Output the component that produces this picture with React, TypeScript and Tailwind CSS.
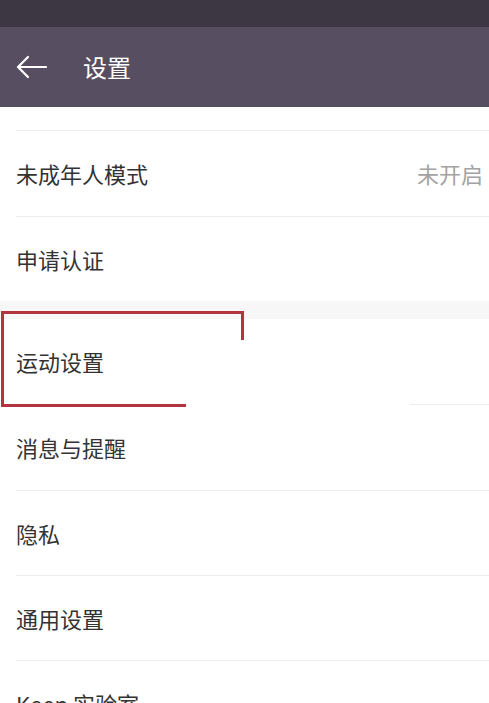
const font = { fontFamily: '"Noto Sans CJK SC", "Noto Sans", sans-serif' };

const Row = ({ label, value, sepClass = "ml-4", last = false, h = "h-[85px]" }: { label: string; value?: string; sepClass?: string; last?: boolean; h?: string }) => (
  <div>
    <div className={`flex items-center justify-between pl-4 pr-[6px] ${h}`}>
      <span className="text-[22px] text-[#333333]">{label}</span>
      {value && <span className="text-[22px] text-[#a3a3a3]">{value}</span>}
    </div>
    {!last && <div className={`h-px bg-[#ededed] ${sepClass}`} />}
  </div>
);

export default function App() {
  return (
    <div className="w-[489px] h-[703px] overflow-hidden bg-white relative" style={font}>
      <div className="h-[27px] bg-[#3d3643]" />
      <div className="h-[80px] bg-[#574f61] flex items-center">
        <svg className="ml-4" width="31" height="24" viewBox="0 0 31 24" fill="none" stroke="white" strokeWidth="2.2" strokeLinecap="round" strokeLinejoin="round">
          <path d="M30 12H2" />
          <path d="M12 2L2 12l10 10" />
        </svg>
        <span className="ml-[36px] text-[24px] text-white">设置</span>
      </div>
      <div className="h-[23px]" />
      <div className="h-px bg-[#ededed] ml-4" />
      <Row label="未成年人模式" value="未开启" />
      <Row label="申请认证" last h="h-[84px]" />
      <div className="h-[18px] bg-[#f7f7f7]" />
      <Row label="运动设置" sepClass="ml-[410px]" />
      <Row label="消息与提醒" />
      <Row label="隐私" h="h-[84px]" />
      <Row label="通用设置" h="h-[84px]" />
      <Row label="Keep 实验室" last />
      <div className="absolute left-[1px] top-[311px] w-[243px] h-[96px] border-l-[3px] border-t-[3px] border-[#b3343f]" />
      <div className="absolute left-[241px] top-[311px] w-[3px] h-[29px] bg-[#b3343f]" />
      <div className="absolute left-[1px] top-[404px] w-[185px] h-[3px] bg-[#b3343f]" />
    </div>
  );
}
